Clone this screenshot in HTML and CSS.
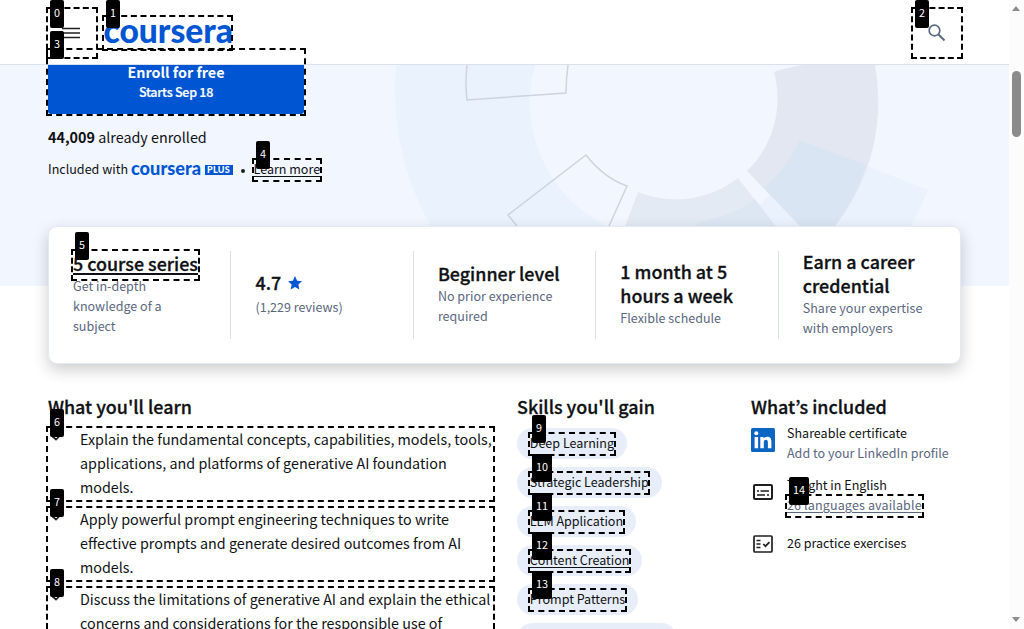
FILE: index.html
```html
<!DOCTYPE html>
<html lang="en">
<head>
<meta charset="utf-8">
<title>Coursera</title>
<link rel="stylesheet" href="styles.css">
</head>
<body>
<div class="page">
  <header class="topbar">
    <svg class="menu" width="18" height="12" viewBox="0 0 18 12"><path d="M0 1.500h18M0 6h18M0 10.500h18" stroke="#1f1f1f" stroke-width="1.7"/></svg>
    <svg class="logo" width="130" height="36" viewBox="0 0 130 36"><text x="-.5" y="28" textLength="129.500" lengthAdjust="spacingAndGlyphs">coursera</text></svg>
    <svg class="search" width="18" height="18" viewBox="0 0 18 18"><circle cx="6.5" cy="6.5" r="5.3" fill="none" stroke="#5b6780" stroke-width="1.7"/><path d="M10.5 10.5l6 6" stroke="#5b6780" stroke-width="2"/></svg>
  </header>
  <section class="hero">
    <svg class="art" width="1009" height="221" viewBox="0 65 1009 221">
      <path d="M396 65A275 275 0 0 0 670 365A275 275 0 0 0 928 190L800 140A136 136 0 0 1 535 65Z" fill="#eaf2fe"/>
      <path d="M774 72Q786 68 803 65H875A201 201 0 0 1 818 245L747 171A101 101 0 0 0 774 72Z" fill="#e3e7f1"/>
      <path d="M638 192A101 101 0 0 0 738 178L790 245H618Z" fill="#e4eaf4"/>
      <path d="M800 140L866 165A201 201 0 0 1 818 245L764 188Q787 168 800 140Z" fill="#dae5f3"/>
      <path d="M755 199L790 245H672L699 222Q732 216 755 199Z" fill="#dde7f4"/>
      <path d="M467 65Q465 84 467 100L566 93Q566 80 568 65M517 226L508 215L586 155Q604 178 627 186L609 226" fill="none" stroke="#cdd4e0" stroke-width="1.5"/>
    </svg>
    <div class="enroll"><b>Enroll for free</b><span>Starts Sep 18</span></div>
    <p class="count"><b>44,009</b> already enrolled</p>
    <div class="plan"><span class="inc">Included with</span>
      <svg width="71" height="20" viewBox="0 0 71 20"><text class="mini" x="0" y="16" textLength="70" lengthAdjust="spacingAndGlyphs">coursera</text></svg>
      <span class="plus">PLUS</span><i class="dot"></i><a class="more">Learn more</a></div>
  </section>
  <section class="stats">
    <div class="stat"><h3><u>5 course series</u></h3><p>Get in-depth<br>knowledge of a<br>subject</p></div>
    <div class="stat"><h3 class="rate">4.7 <svg width="14" height="14" viewBox="0 0 14 14"><path d="M7 0l2.1 4.7 4.9.5-3.7 3.4 1.1 5L7 11l-4.4 2.6 1.1-5L0 5.200l4.900-.5z" fill="#0056d2"/></svg></h3><p>(1,229 reviews)</p></div>
    <div class="stat"><h3>Beginner level</h3><p>No prior experience<br>required</p></div>
    <div class="stat"><h3>1 month at 5<br>hours a week</h3><p>Flexible schedule</p></div>
    <div class="stat"><h3>Earn a career<br>credential</h3><p>Share your expertise<br>with employers</p></div>
  </section>
  <main class="cols">
    <section class="learn"><h2>What you'll learn</h2>
      <ul>
        <li><svg width="16" height="16" viewBox="0 0 16 16"><path d="M4 9l4 3.500 4.500-4.500" fill="none" stroke="#1f1f1f" stroke-width="1.700"/></svg><p>Explain the fundamental concepts, capabilities, models, tools,<br>applications, and platforms of generative AI foundation<br>models.</p></li>
        <li><svg width="16" height="16" viewBox="0 0 16 16"><path d="M4 9l4 3.500 4.500-4.500" fill="none" stroke="#1f1f1f" stroke-width="1.700"/></svg><p>Apply powerful prompt engineering techniques to write<br>effective prompts and generate desired outcomes from AI<br>models.</p></li>
        <li><svg width="16" height="16" viewBox="0 0 16 16"><path d="M4 9l4 3.500 4.500-4.500" fill="none" stroke="#1f1f1f" stroke-width="1.700"/></svg><p>Discuss the limitations of generative AI and explain the ethical<br>concerns and considerations for the responsible use of</p></li>
      </ul>
    </section>
    <section class="skills"><h2>Skills you'll gain</h2>
      <div class="chips"><span>Deep Learning</span><span>Strategic Leadership</span><span>LLM Application</span><span><u>Content Creation</u></span><span>Prompt Patterns</span><span class="last"></span></div>
    </section>
    <section class="incl"><h2>What’s included</h2>
      <div class="row linkedin">
        <svg width="24" height="24" viewBox="0 0 24 24"><rect width="24" height="24" rx="1.5" fill="#0a66c2"/><circle cx="5.300" cy="5.300" r="2" fill="#fff"/><path d="M3.600 9h3.500v11.300H3.600zM9.300 9h3.300v1.600c.6-1.100 1.800-1.900 3.500-1.900 3.500 0 4.300 2.200 4.300 5.300v6.300h-3.500v-5.600c0-1.500-.2-2.900-2-2.900s-2.100 1.400-2.100 2.900v5.600H9.300z" fill="#fff"/></svg>
        <div><p>Shareable certificate</p><p class="sub">Add to your LinkedIn profile</p></div></div>
      <div class="row taught">
        <svg width="24" height="24" viewBox="0 0 24 24"><rect x="3" y="5" width="18" height="14" rx="1" fill="none" stroke="#1f1f1f" stroke-width="2"/><path d="M6 11h2M9.500 11H18M6 15h8M16 15h2" stroke="#1f1f1f" stroke-width="1.700"/></svg>
        <div><p>Taught in English</p><p class="sub langs"><u>26 languages available</u></p></div></div>
      <div class="row one">
        <svg width="24" height="24" viewBox="0 0 24 24"><rect x="3" y="4" width="18" height="16" rx="1" fill="none" stroke="#1f1f1f" stroke-width="1.700"/><path d="M5.500 8.500h4M5.500 12h4M5.500 15.500h4M12.300 12l2.200 2.200 4-4" fill="none" stroke="#1f1f1f" stroke-width="1.700"/></svg>
        <div><p>26 practice exercises</p></div></div>
    </section>
  </main>
</div>
<aside class="scroll"><i class="up"></i><i class="thumb"></i><i class="down"></i></aside>
<div class="marks">
  <div class="box b0"></div><div class="box b1"></div><div class="box b2"></div><div class="box b3"></div><div class="box b4"></div>
  <div class="box b5"></div><div class="box b6"></div><div class="box b7"></div><div class="box b8"></div><div class="box b9"></div>
  <div class="box b10"></div><div class="box b11"></div><div class="box b12"></div><div class="box b13"></div><div class="box b14"></div>
  <span class="tag t0">0</span><span class="tag t1">1</span><span class="tag t2">2</span><span class="tag t3">3</span><span class="tag t4">4</span>
  <span class="tag t5">5</span><span class="tag t6">6</span><span class="tag t7">7</span><span class="tag t8">8</span><span class="tag t9">9</span>
  <span class="tag t10">10</span><span class="tag t11">11</span><span class="tag t12">12</span><span class="tag t13">13</span><span class="tag t14">14</span>
</div>
</body>
</html>
```
FILE: styles.css
```css
*{box-sizing:border-box;margin:0;padding:0}
body{position:relative;display:flex;width:1024px;height:629px;overflow:hidden;background:#fff;color:#0f1114;font:14.33px/24px "Noto Sans CJK JP","Noto Sans CJK SC",sans-serif;white-space:nowrap}
svg{display:block;flex:none}
.page{width:1009px;height:629px;overflow:hidden}
.topbar{display:flex;align-items:center;height:65px;padding:1px 63px 0 62px;border-bottom:1px solid #dae1ed;background:#fff}
.logo{margin-left:24px;overflow:visible}
.logo text,.mini{font-family:Lato,sans-serif;font-weight:900;font-size:35px;fill:#0056d2}
.mini{font-size:19px}
.search{margin-left:auto}
.hero{position:relative;height:221px;background:#f2f6ff;padding-left:48px}
.art{position:absolute;left:0;top:0}
.enroll{position:relative;display:flex;flex-direction:column;align-items:center;width:256px;height:49px;background:#0056d2;color:#fff;border-radius:0 0 3px 3px}
.enroll b{line-height:14px}
.enroll span{font-size:12.5px;line-height:25px;font-weight:500;letter-spacing:-.25px;-webkit-text-stroke:.2px #fff}
.count{position:relative;margin-top:11px}
.plan{position:relative;display:flex;align-items:center;height:24px;margin-top:8px;font-size:12.54px}
.inc{width:82.500px}
.plus{width:28px;height:10px;margin-left:3px;margin-top:1px;background:#0056d2;color:#fff;font:900 9px/10px Lato,sans-serif;letter-spacing:.3px;text-align:center}
.dot{width:4px;height:4px;margin:4px 9px 0 8px;border-radius:50%;background:#1f1f1f}
.more{text-decoration:underline;text-underline-offset:2px}
.stats{position:relative;display:grid;grid-template-columns:repeat(5,182.450px);width:913px;height:138px;margin:-60px 0 0 48px;padding:24px 0;background:#fff;border:1px solid #e3eaf6;border-radius:9px;box-shadow:0 6px 16px rgba(0,0,0,.2)}
.stat{display:flex;flex-direction:column;justify-content:center;height:88px;margin-left:-1px;padding:0 0 2px 24px;border-left:1px solid #dae1ed}
.stat:first-child{border-color:transparent}
h2,h3{font-size:17.900px;line-height:24px;font-weight:500;-webkit-text-stroke:.3px #0f1114}
.stat h3{position:relative;top:-1px;margin-top:-1px}
.stat p{font-size:12.540px;line-height:20px;color:#5b6780}
.stat u{text-underline-offset:2px;text-decoration-thickness:2px}
.stat .rate{display:flex;align-items:center;gap:7px;top:0}
.rate+p{margin-top:3px}
.rate svg{margin-top:2px}
.cols{display:grid;grid-template-columns:469px 234px 1fr;height:235px;overflow:hidden;margin:30px 0 0 48px}
ul{list-style:none}
h2{height:33px}
li{display:flex;gap:16px;margin-bottom:8px}
.chips{display:flex;flex-direction:column;align-items:flex-start;gap:8px;margin-top:1px;font-size:12.540px}
.chips span{height:31px;line-height:29px;padding:0 12.800px;border-radius:16px;background:#e8eef9}
.chips .last{width:160px}
.row{display:flex;gap:12px;height:40px;margin-bottom:12px;font-size:12.540px;line-height:20px;align-items:center}
.linkedin{margin-top:-4px}
.linkedin>svg{margin-top:-7px}
.taught>svg{margin-top:-6px}
.one{height:24px;margin-top:17px}
.one>div{margin-top:-2px}
.sub{color:#5b6780}
.langs{letter-spacing:.13px}
u{text-underline-offset:2px}
.scroll{position:relative;width:15px;background:#fcfcfc}
.scroll i{position:absolute;left:3px}
.thumb{top:71px;width:9px;height:66px;border-radius:5px;background:#8b8b8b}
.up,.down{border:4.500px solid transparent}
.up{top:2px;border-bottom:5px solid #8b8b8b}
.down{top:617px;border-top:5px solid #8b8b8b}
.box,.tag{position:absolute}
.box{border:2px dashed #000}
.tag{height:28px;padding:0 4px;border-radius:2px;background:#000;color:#fff;font-size:10.800px;line-height:24px}
.b0{left:46px;top:7px;width:52px;height:52px}
.b1{left:102px;top:15px;width:131px;height:36px}
.b2{left:911px;top:7px;width:52px;height:52px}
.b3{left:46px;top:48px;width:260px;height:68px}
.b4{left:252px;top:158px;width:70px;height:24px}
.b5{left:71px;top:249px;width:129px;height:32px}
.b6,.b7,.b8{left:46px;width:449px;height:76px}
.b6{top:426px}.b7{top:506px}.b8{top:586px;height:43px;border-bottom:0}
.b9,.b10,.b11,.b12,.b13{left:528px;height:24px}
.b9{top:432px;width:88px}.b10{top:471px;width:122px}.b11{top:510px;width:97px}.b12{top:549px;width:103px}.b13{top:588px;width:99px}
.b14{left:785px;top:494px;width:139px;height:24px}
.t0{left:50px;top:0}.t1{left:106px;top:0}.t2{left:915px;top:0}.t3{left:50px;top:31px}
.t4{left:256px;top:141px}.t5{left:75px;top:232px}
.t6{left:50px;top:409px}.t7{left:50px;top:489px}.t8{left:50px;top:569px}
.t9,.t10,.t11,.t12,.t13{left:532px}
.t9{top:415px}.t10{top:454px}.t11{top:493px}.t12{top:532px}.t13{top:571px}
.t14{left:789px;top:477px}
```
